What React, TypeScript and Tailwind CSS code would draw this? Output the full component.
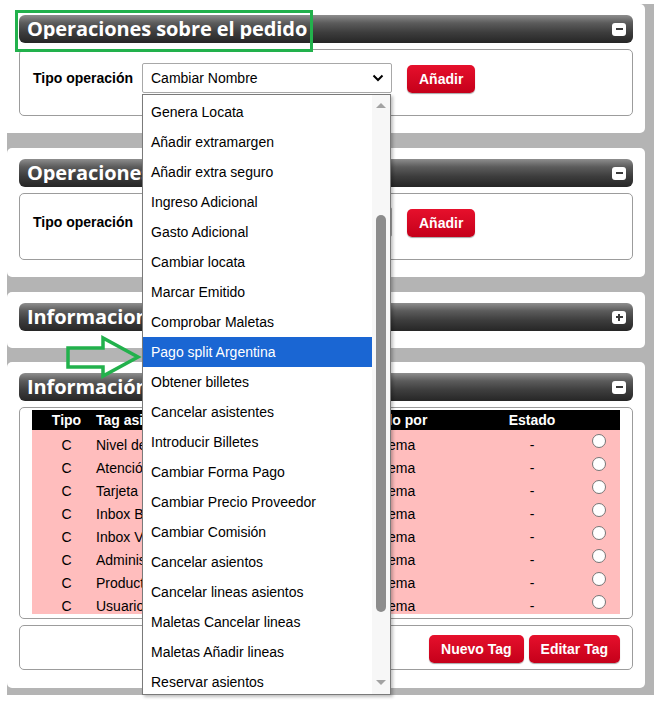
import React from 'react';

const opciones = [
  'Genera Locata',
  'Añadir extramargen',
  'Añadir extra seguro',
  'Ingreso Adicional',
  'Gasto Adicional',
  'Cambiar locata',
  'Marcar Emitido',
  'Comprobar Maletas',
  'Pago split Argentina',
  'Obtener billetes',
  'Cancelar asistentes',
  'Introducir Billetes',
  'Cambiar Forma Pago',
  'Cambiar Precio Proveedor',
  'Cambiar Comisión',
  'Cancelar asientos',
  'Cancelar lineas asientos',
  'Maletas Cancelar lineas',
  'Maletas Añadir lineas',
  'Reservar asientos',
];

const tags = [
  'Nivel de servicio',
  'Atención preferente',
  'Tarjeta corporativa',
  'Inbox Billetes',
  'Inbox Viajes',
  'Administración',
  'Producto especial',
  'Usuario VIP',
];

const SEL = 'Pago split Argentina';

function Cabecera({ titulo, abierto = true }: { titulo: string; abierto?: boolean }) {
  return (
    <div className="flex h-[28px] items-center justify-between rounded-[6px] bg-[linear-gradient(to_bottom,#8e8e8e_0%,#5c5c5c_28%,#3d3d3d_62%,#262626_100%)] pl-[8px] pr-[7px]">
      <span className="min-w-0 overflow-hidden whitespace-nowrap font-['Open_Sans',sans-serif] text-[20px] font-bold leading-none tracking-[-0.1px] text-white">
        {titulo}
      </span>
      <span className="relative flex h-[13px] w-[14px] shrink-0 items-center justify-center rounded-[3px] bg-white">
        <span className="h-[2px] w-[7px] bg-[#3a3a3a]" />
        {!abierto && <span className="absolute h-[7px] w-[2px] bg-[#3a3a3a]" />}
      </span>
    </div>
  );
}

function BotonRojo({ children }: { children: React.ReactNode }) {
  return (
    <button className="h-[28px] whitespace-nowrap rounded-[5px] bg-[linear-gradient(to_bottom,#e6102c,#c5001a)] px-[12px] text-[14px] font-bold text-white shadow-[0_1px_1px_rgba(0,0,0,0.35)]">
      {children}
    </button>
  );
}

function Desplegable() {
  return (
    <div className="absolute left-0 top-[31px] z-10 flex h-[601px] w-[249px] border border-[#7a7a7a] bg-white shadow-[2px_2px_3px_rgba(0,0,0,0.25)]">
      <div className="flex-1 overflow-hidden pt-[2px]">
        {opciones.map((o) => (
          <div
            key={o}
            className={
              o === SEL
                ? 'flex h-[30px] items-center whitespace-nowrap bg-[#1a66d3] pl-[8px] text-white'
                : 'flex h-[30px] items-center whitespace-nowrap pl-[8px] text-black'
            }
          >
            {o}
          </div>
        ))}
      </div>
      <div className="flex w-[18px] flex-col items-center bg-[#f7f7f7]">
        <div className="mt-[8px] h-0 w-0 border-x-[5px] border-b-[5px] border-x-transparent border-b-[#a3a3a3]" />
        <div className="mt-[107px] h-[397px] w-[10px] rounded-full bg-[#8c8c8c]" />
        <div className="mb-[9px] mt-auto h-0 w-0 border-x-[5px] border-t-[5px] border-x-transparent border-t-[#a3a3a3]" />
      </div>
    </div>
  );
}

function FilaOperacion({ abierto }: { abierto?: boolean }) {
  return (
    <div className="mt-[6px] flex h-[67px] items-start rounded-[5px] border border-[#9c9c9c] pl-[13px] pt-[13px]">
      <div className="flex items-center">
        <span className="w-[99px] whitespace-nowrap text-[14px] font-bold text-black">Tipo operación</span>
        <div className="relative ml-[10px]">
          <div className="flex h-[30px] w-[250px] items-center justify-between rounded-[2px] border border-[#a8a8a8] bg-white pl-[8px] pr-[7px] text-[14px] text-black">
            <span>Cambiar Nombre</span>
            <svg width="12" height="8" viewBox="0 0 12 8" fill="none">
              <path d="M1.5 1.5 6 6l4.5-4.5" stroke="#000" strokeWidth="2" />
            </svg>
          </div>
          {abierto && <Desplegable />}
        </div>
        <div className="ml-[15px] mt-[2px]">
          <BotonRojo>Añadir</BotonRojo>
        </div>
      </div>
    </div>
  );
}

export default function App() {
  return (
    <div className="relative h-[717px] w-[666px] overflow-hidden bg-white font-['Liberation_Sans',Arial,sans-serif] text-[14px]">
      <div className="ml-[7px] mt-[4px] flex w-[647px] flex-col gap-[15px] bg-[#b4b4b4] pb-[7px] pr-[9px]">
        <section className="rounded-r-[5px] bg-white px-[12px] pb-[17px] pt-[11px]">
          <Cabecera titulo="Operaciones sobre el pedido" />
          <FilaOperacion abierto />
        </section>

        <section className="rounded-[5px] bg-white px-[12px] pb-[17px] pt-[11px]">
          <Cabecera titulo="Operaciones sobre los servicios" />
          <FilaOperacion />
        </section>

        <section className="rounded-[5px] bg-white px-[12px] pb-[17px] pt-[11px]">
          <Cabecera titulo="Informacion adicional" abierto={false} />
        </section>

        <section className="-mt-[1px] rounded-[5px] bg-white px-[12px] pb-[18px] pt-[11px]">
          <Cabecera titulo="Información de tags" />
          <div className="mt-[6px] rounded-[5px] border border-[#9c9c9c] px-[12px] pb-[4px] pt-[2px]">
            <div className="grid h-[20px] grid-cols-[64px_247px_94px_49px_92px_42px] whitespace-nowrap bg-black text-[14px] font-bold leading-[20px] text-white">
              <span className="pl-[5px] text-center">Tipo</span>
              <span>Tag asignado</span>
              <span className="text-center">Creado por</span>
              <span />
              <span className="text-center">Estado</span>
              <span />
            </div>
            {tags.map((t) => (
              <div
                key={t}
                className="grid h-[23px] grid-cols-[64px_247px_94px_49px_92px_42px] whitespace-nowrap bg-[#ffbdbd] text-black"
              >
                <span className="pl-[5px] pt-[7px] text-center leading-[17px]">C</span>
                <span className="pt-[7px] leading-[17px]">{t}</span>
                <span className="pt-[7px] text-center leading-[17px]">Sistema</span>
                <span />
                <span className="pt-[7px] text-center leading-[17px]">-</span>
                <span className="flex justify-center pt-[4px]">
                  <span className="h-[14px] w-[14px] rounded-full border border-[#767676] bg-white" />
                </span>
              </div>
            ))}
          </div>
          <div className="mt-[6px] flex h-[45px] items-start justify-end gap-[5px] rounded-[5px] border border-[#9c9c9c] pr-[12px] pt-[9px]">
            <BotonRojo>Nuevo Tag</BotonRojo>
            <BotonRojo>Editar Tag</BotonRojo>
          </div>
        </section>
      </div>

      {/* anotaciones en verde */}
      <div className="pointer-events-none absolute left-[15px] top-[10px] h-[42px] w-[298px] border-[3px] border-[#22b14c]" />
      <svg
        className="pointer-events-none absolute left-[64px] top-[334px]"
        width="80"
        height="46"
        viewBox="0 0 80 46"
        fill="none"
      >
        <path
          d="M4 14h35V4l35 19-35 19V33H4z"
          stroke="#22b14c"
          strokeWidth="3.5"
          strokeLinejoin="miter"
        />
      </svg>
    </div>
  );
}
